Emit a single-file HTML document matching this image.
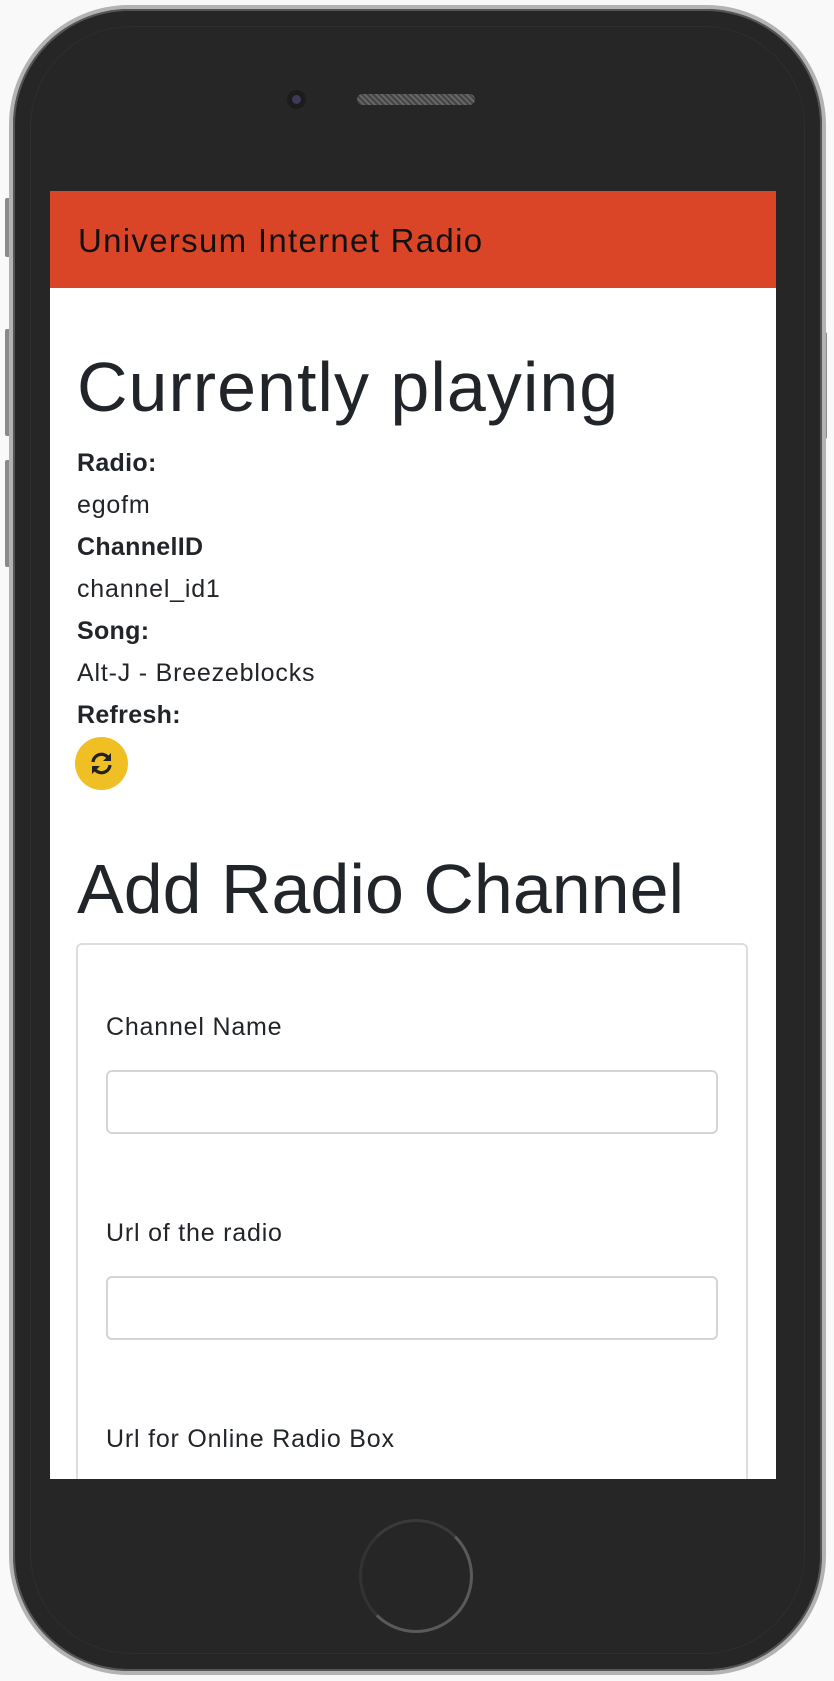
<!DOCTYPE html>
<html><head><meta charset="utf-8"><style>
*{box-sizing:border-box;margin:0;padding:0}
body{width:834px;height:1681px;background:#f9f9f9;position:relative;overflow:hidden;font-family:"Liberation Sans",sans-serif;color:#212529}
.btn{position:absolute;background:#8a8a8a;border-radius:2px}
.phone{position:absolute;left:9px;top:5px;width:817px;height:1670px;border-radius:120px;background:#b3b3b3;}
.body{position:absolute;left:4px;top:4px;right:4px;bottom:4px;border-radius:116px;background:#262626;box-shadow:inset 0 0 0 2px #555}
.inner{position:absolute;left:18px;top:18px;right:18px;bottom:18px;border-radius:100px;background:#262626;box-shadow:0 0 0 1px #2e2e2e}
.cam{position:absolute;left:287px;top:90px;width:19px;height:19px;border-radius:50%;background:#1c1c1c}
.cam:after{content:"";position:absolute;left:5px;top:5px;width:9px;height:9px;border-radius:50%;background:#3d3a5a}
.spk{position:absolute;left:357px;top:94px;width:118px;height:11px;border-radius:6px;background:repeating-linear-gradient(45deg,#666 0 2px,#444 2px 4px)}
.home{position:absolute;left:359px;top:1519px;width:114px;height:114px;border-radius:50%;border:3px solid #5a5a5a;border-left-color:#333;border-top-color:#3a3a3a}
.screen{position:absolute;left:50px;top:191px;width:726px;height:1288px;background:#fff;overflow:hidden}
.hdr{height:97px;background:#db4527;color:#111;font-size:33px;padding:31px 0 0 28px;letter-spacing:1.3px;white-space:nowrap}
.h1{position:absolute;left:27px;font-size:70px;white-space:nowrap}
.t{position:absolute;left:27px;font-size:25px;letter-spacing:0.8px;white-space:nowrap}
.b{font-weight:bold;letter-spacing:0.3px}
.rb{position:absolute;left:25px;top:546px;width:53px;height:53px;border-radius:50%;background:#f0bf24}
.card{position:absolute;left:26px;top:752px;width:672px;height:700px;border:2px solid #ddd;border-radius:6px}
.inp{position:absolute;left:56px;width:612px;height:64px;border:2px solid #d3d5d8;border-radius:6px}
</style></head><body>
<div class="btn" style="left:5px;top:198px;width:6px;height:59px"></div>
<div class="btn" style="left:5px;top:329px;width:6px;height:107px"></div>
<div class="btn" style="left:5px;top:460px;width:6px;height:107px"></div>
<div class="btn" style="left:821px;top:332px;width:6px;height:107px"></div>
<div class="phone"><div class="body"><div class="inner"></div></div></div>
<div class="cam"></div><div class="spk"></div><div class="home"></div>
<div class="screen">
<div class="hdr">Universum Internet Radio</div>
<div class="h1" style="top:156px;letter-spacing:1px">Currently playing</div>
<div class="t b" style="top:258px">Radio:</div>
<div class="t" style="top:300px">egofm</div>
<div class="t b" style="top:342px">ChannelID</div>
<div class="t" style="top:384px">channel_id1</div>
<div class="t b" style="top:426px">Song:</div>
<div class="t" style="top:468px">Alt-J - Breezeblocks</div>
<div class="t b" style="top:510px">Refresh:</div>
<div class="rb"><svg width="53" height="53" viewBox="0 0 53 53"><g fill="none" stroke="#222" stroke-width="3.2"><path d="M18 25a8.5 8.5 0 0 1 15.5-4"/><path d="M35 28a8.5 8.5 0 0 1-15.5 4"/></g><path d="M36 16v8h-8z" fill="#222"/><path d="M17 37v-8h8z" fill="#222"/></svg></div>
<div class="h1" style="top:658px">Add Radio Channel</div>
<div class="card">
<div class="t" style="left:28px;top:68px">Channel Name</div>
<div class="inp" style="left:28px;top:125px"></div>
<div class="t" style="left:28px;top:274px">Url of the radio</div>
<div class="inp" style="left:28px;top:331px"></div>
<div class="t" style="left:28px;top:480px">Url for Online Radio Box</div>
</div>
</div>
</body></html>
